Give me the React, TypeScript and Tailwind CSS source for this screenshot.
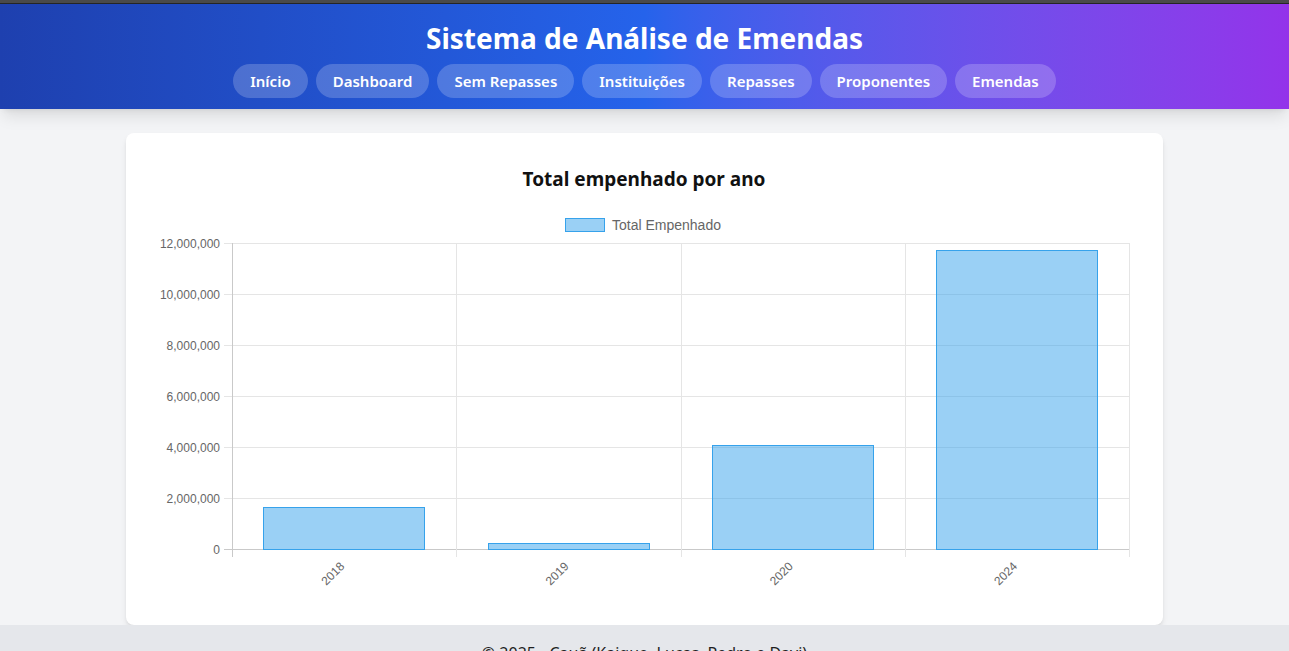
import React from 'react';

const navItems = ['Início', 'Dashboard', 'Sem Repasses', 'Instituições', 'Repasses', 'Proponentes', 'Emendas'];

const data = [
  { label: '2018', value: 1650000 },
  { label: '2019', value: 235000 },
  { label: '2020', value: 4080000 },
  { label: '2024', value: 11730000 },
];

const yTicks = [0, 2000000, 4000000, 6000000, 8000000, 10000000, 12000000];

function BarChart() {
  // plot area in svg coordinates
  const left = 82;
  const right = 979;
  const top = 38;
  const bottom = 344;
  const max = 12000000;
  const catW = (right - left) / data.length;
  const barW = catW * 0.72;
  const yOf = (v: number) => bottom - (v / max) * (bottom - top);

  return (
    <svg width={988} height={396} className="block" style={{ fontFamily: '"Liberation Sans", Arial, sans-serif' }}>
      {/* legend */}
      <rect x={415.5} y={13.5} width={39} height={13} fill="rgba(54,162,235,0.5)" stroke="rgb(54,162,235)" strokeWidth={1} />
      <text x={462} y={24.5} fontSize={14} fill="#666">Total Empenhado</text>

      {/* horizontal grid */}
      {yTicks.map((t) => {
        const y = Math.round(yOf(t)) + 0.5;
        return (
          <g key={t}>
            <line x1={74} x2={right} y1={y} y2={y} stroke={t === 0 ? '#c9c9c9' : '#e5e5e5'} strokeWidth={1} />
            <text x={70} y={y + 4} fontSize={12} fill="#666" textAnchor="end">
              {t.toLocaleString('en-US')}
            </text>
          </g>
        );
      })}

      {/* vertical grid */}
      {data.map((_, i) => {
        const x = Math.round(left + i * catW) + 0.5;
        return <line key={i} x1={x} x2={x} y1={top} y2={352} stroke={i === 0 ? '#c9c9c9' : '#e5e5e5'} strokeWidth={1} />;
      })}
      <line x1={right + 0.5} x2={right + 0.5} y1={top} y2={352} stroke="#e5e5e5" strokeWidth={1} />

      {/* bars */}
      {data.map((d, i) => {
        const cx = left + i * catW + catW / 2;
        const y = yOf(d.value);
        return (
          <rect
            key={d.label}
            x={Math.round(cx - barW / 2) + 0.5}
            y={Math.round(y) + 0.5}
            width={Math.round(barW)}
            height={bottom - Math.round(y)}
            fill="rgba(54,162,235,0.5)"
            stroke="rgb(54,162,235)"
            strokeWidth={1}
          />
        );
      })}

      {/* x labels */}
      {data.map((d, i) => {
        const cx = left + i * catW + catW / 2;
        return (
          <text
            key={d.label}
            transform={`translate(${cx + 1}, ${362}) rotate(-45)`}
            fontSize={12}
            fill="#666"
            textAnchor="end"
          >
            {d.label}
          </text>
        );
      })}
    </svg>
  );
}

export default function App() {
  return (
    <div className="min-h-screen flex flex-col bg-[#f3f4f6]" style={{ fontFamily: '"Noto Sans", "Open Sans", sans-serif' }}>
      <div className="h-[4px] bg-[#4a4a4a] border-b border-[#262626]" />
      <header className="bg-linear-to-r from-[#1e40af] via-[#2563eb] to-[#9333ea] shadow-lg pt-4 pb-[11px] relative z-10">
        <h1 className="text-center text-white font-bold text-[28px] leading-9">Sistema de Análise de Emendas</h1>
        <nav className="mt-2 flex justify-center gap-2">
          {navItems.map((item) => (
            <a
              key={item}
              href="#"
              className="rounded-full bg-white/20 px-[17px] py-[5px] text-white font-semibold text-[15px] leading-6"
            >
              {item}
            </a>
          ))}
        </nav>
      </header>

      <main className="flex-1 pt-6">
        <div className="w-[1037px] mx-auto bg-white rounded-lg shadow-md pt-8 pb-6 pl-6 pr-[25px]">
          <h2 className="text-center text-[19px] font-bold text-[#111] leading-7">Total empenhado por ano</h2>
          <div className="mt-3">
            <BarChart />
          </div>
        </div>
      </main>

      <footer className="bg-[#e5e7eb] py-4 text-center text-[16px] text-[#1f1f1f]">
        © 2025 - Cauã (Kaique, Lucas, Pedro e Davi)
      </footer>
    </div>
  );
}
